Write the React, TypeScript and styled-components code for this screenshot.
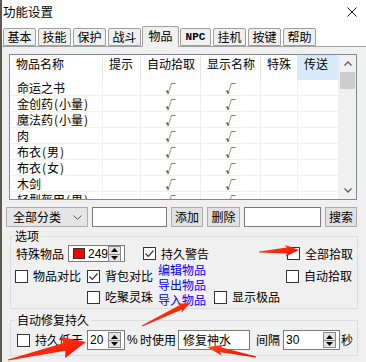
import React from "react";
import styled, { createGlobalStyle } from "styled-components";

const GlobalStyle = createGlobalStyle`
  html, body { margin: 0; padding: 0; background: #f0f0f0; }
  body {
    font-family: "Noto Sans CJK SC", "Noto Sans", sans-serif;
    font-size: 12px;
    line-height: 14px;
    color: #000;
  }
  * { box-sizing: border-box; }
`;

const Window = styled.div`
  position: relative;
  width: 366px;
  height: 362px;
  background: #f0f0f0;
  border-left: 2px solid #5f574c;
  overflow: hidden;
  display: flex;
  flex-direction: column;
`;

const TitleBar = styled.div`
  flex: none;
  height: 26px;
  background: #fff;
  display: flex;
  align-items: center;
  justify-content: space-between;
  padding: 0 9px 2px 1px;
  font-size: 12.5px;
`;

const TabStrip = styled.div`
  flex: none;
  height: 21px;
  display: flex;
  align-items: flex-end;
  gap: 2px;
  padding-left: 1px;
  background: #fff;
  border-bottom: 1px solid #a0a0a0;
`;

const Tab = styled.div<{ $w: number; $active?: boolean; $latin?: boolean }>`
  width: ${(p) => p.$w}px;
  height: ${(p) => (p.$active ? 21 : 18)}px;
  margin: ${(p) => (p.$active ? "0 -1px -1px -1px" : "0")};
  border: 1px solid #a0a0a0;
  border-bottom: ${(p) => (p.$active ? "none" : "1px solid #a0a0a0")};
  border-radius: 2px 2px 0 0;
  background: #f0f0f0;
  display: flex;
  align-items: ${(p) => (p.$active ? "flex-start" : "center")};
  padding-top: ${(p) => (p.$active ? 2 : 0)}px;
  justify-content: center;
  font-family: ${(p) =>
    p.$latin ? '"Liberation Mono", monospace' : '"Noto Sans CJK SC", sans-serif'};
  font-size: ${(p) => (p.$latin ? 11 : 12)}px;
  font-weight: ${(p) => (p.$latin ? 700 : 400)};
  position: relative;
  z-index: ${(p) => (p.$active ? 1 : 0)};
`;

const Panel = styled.div`
  flex: 1;
  display: flex;
  flex-direction: column;
  padding: 7px 0 0 4px;
`;

/* ---------- list view ---------- */
const List = styled.div`
  margin-left: 3px;
  width: 348px;
  height: 146px;
  border: 1px solid #828790;
  background: #fff;
  display: flex;
`;

const ListBody = styled.div`
  flex: 1;
  overflow: hidden;
  display: flex;
  flex-direction: column;
`;

const HeaderRow = styled.div`
  flex: none;
  height: 25px;
  display: flex;
`;

const HeaderCell = styled.div<{ $w: number; $hl?: boolean }>`
  width: ${(p) => p.$w}px;
  flex: none;
  padding: 2px 0 0 6px;
  border-right: 1px solid ${(p) => (p.$hl ? "#d9ebf9" : "#e5e5e5")};
  background: ${(p) => (p.$hl ? "#d9ebf9" : "#fff")};
  white-space: nowrap;
  overflow: hidden;
`;

const Row = styled.div`
  flex: none;
  height: 16px;
  display: flex;
  border-bottom: 1px solid #f0f0f0;
`;

const Cell = styled.div<{ $w: number; $center?: boolean }>`
  width: ${(p) => p.$w}px;
  flex: none;
  border-right: 1px solid #f0f0f0;
  padding-left: ${(p) => (p.$center ? 0 : 7)}px;
  display: flex;
  align-items: center;
  justify-content: ${(p) => (p.$center ? "center" : "flex-start")};
  line-height: 15px;
  white-space: nowrap;
  overflow: hidden;
`;

const Paren = styled.span`
  display: inline-block;
  width: 6px;
  text-align: center;
`;

const Tick = styled.span`
  font-size: 10px;
  line-height: 10px;
  margin-top: 3px;
`;

const ScrollBar = styled.div`
  flex: none;
  width: 17px;
  background: #f0f0f0;
  display: flex;
  flex-direction: column;
`;

const ScrollBtn = styled.div`
  height: 17px;
  display: flex;
  align-items: center;
  justify-content: center;
`;

const Thumb = styled.div`
  height: 17px;
  margin: 0 1px;
  background: #cdcdcd;
`;

const ScrollTrack = styled.div`
  flex: 1;
`;

/* ---------- toolbar ---------- */
const Toolbar = styled.div`
  margin-top: 7px;
  height: 20px;
  display: flex;
  gap: 4px;
`;

const Combo = styled.div`
  width: 82px;
  height: 20px;
  border: 1px solid #adadad;
  background: #e5e5e5;
  display: flex;
  align-items: center;
  justify-content: space-between;
  padding: 0 5px 0 6px;
`;

const Input = styled.div<{ $w: number; $ml?: number }>`
  width: ${(p) => p.$w}px;
  height: 20px;
  margin-left: ${(p) => p.$ml ?? 0}px;
  border: 1px solid #7a7a7a;
  background: #fff;
  display: flex;
  align-items: center;
  padding-left: 4px;
  flex: none;
`;

const Button = styled.div<{ $w: number }>`
  width: ${(p) => p.$w}px;
  height: 20px;
  border: 1px solid #adadad;
  background: #e1e1e1;
  display: flex;
  align-items: center;
  justify-content: center;
  flex: none;
`;

/* ---------- group boxes ---------- */
const Group = styled.fieldset<{ $mt: number; $pb: number }>`
  margin: ${(p) => p.$mt}px 0 0 4px;
  width: 348px;
  padding: 0 0 ${(p) => p.$pb}px 0;
  border: 1px solid #dcdcdc;
  min-width: 0;
`;

const Legend = styled.legend<{ $ml: number }>`
  margin-left: ${(p) => p.$ml}px;
  padding: 0 2px;
  line-height: 14px;
  font-size: 12px;
`;

const FlexRow = styled.div<{ $h: number; $mt: number; $pl: number }>`
  height: ${(p) => p.$h}px;
  margin-top: ${(p) => p.$mt}px;
  padding-left: ${(p) => p.$pl}px;
  display: flex;
  align-items: center;
`;

const OptGrid = styled.div`
  margin-top: 3px;
  padding-left: 4px;
  display: grid;
  grid-template-columns: 72px 71px 56px 72px 1fr;
  grid-template-rows: 22px 20px;
  align-items: center;
`;

const GridSlot = styled.div<{ $col: number; $row: number; $span?: number }>`
  grid-column: ${(p) => p.$col};
  grid-row: ${(p) => p.$row} / span ${(p) => p.$span ?? 1};
  align-self: ${(p) => (p.$span ? "start" : "center")};
  display: flex;
`;

const Links = styled.div`
  margin-top: -3px;
  display: flex;
  flex-direction: column;
  color: #0000ff;
  line-height: 15px;
  cursor: pointer;
`;

const Text = styled.span<{ $ml?: number; $w?: number; $latin?: boolean }>`
  margin-left: ${(p) => p.$ml ?? 0}px;
  ${(p) => (p.$w ? `width: ${p.$w}px;` : "")}
  flex: none;
  white-space: nowrap;
  font-family: ${(p) =>
    p.$latin ? '"Liberation Sans", sans-serif' : '"Noto Sans CJK SC", sans-serif'};
`;

const CheckLabel = styled.label<{ $ml?: number }>`
  display: inline-flex;
  align-items: center;
  gap: 5px;
  margin-left: ${(p) => p.$ml ?? 0}px;
  white-space: nowrap;
  flex: none;
`;

const CheckBox = styled.span`
  width: 13px;
  height: 13px;
  border: 1px solid #333;
  background: #fff;
  display: inline-flex;
  align-items: center;
  justify-content: center;
  flex: none;
`;

const SpinBox = styled.div<{ $w: number; $h: number; $ml?: number }>`
  width: ${(p) => p.$w}px;
  height: ${(p) => p.$h}px;
  margin-left: ${(p) => p.$ml ?? 0}px;
  border: 1px solid #7a7a7a;
  background: #fff;
  display: flex;
  align-items: center;
  padding: 0 3px 0 2px;
  flex: none;
  font-family: "Liberation Sans", sans-serif;
`;

const Swatch = styled.span`
  width: 13px;
  height: 11px;
  background: #ff0000;
  border: 1px solid #333;
  margin: 0 3px 0 2px;
`;

const SpinCol = styled.span`
  margin-left: auto;
  display: flex;
  flex-direction: column;
  border: 1px solid #8a8a8a;
`;

const SpinBtn = styled.span<{ $top?: boolean }>`
  width: 11px;
  height: 7px;
  background: #e3e3e3;
  border-top: ${(p) => (p.$top ? "none" : "1px solid #8a8a8a")};
  display: flex;
  align-items: center;
  justify-content: center;
`;

const Overlay = styled.svg`
  position: absolute;
  left: -2px;
  top: 0;
  width: 366px;
  height: 362px;
  pointer-events: none;
`;

/* ---------- helpers ---------- */
const Chevron = ({ up }: { up?: boolean }) => (
  <svg width="8" height="5" viewBox="0 0 8 5">
    <polyline
      points={up ? "0.5,4.5 4,1 7.5,4.5" : "0.5,0.5 4,4 7.5,0.5"}
      fill="none"
      stroke="#606060"
      strokeWidth="1.3"
    />
  </svg>
);

const Check = ({ label, checked, ml }: { label: string; checked?: boolean; ml?: number }) => (
  <CheckLabel $ml={ml}>
    <CheckBox>
      {checked && (
        <svg width="11" height="11" viewBox="0 0 11 11">
          <polyline points="1.5,5.5 4.3,8.3 9.5,2.5" fill="none" stroke="#333" strokeWidth="1.2" />
        </svg>
      )}
    </CheckBox>
    <span>{label}</span>
  </CheckLabel>
);

const Spinner = () => (
  <SpinCol>
    <SpinBtn $top>
      <svg width="7" height="4" viewBox="0 0 7 4">
        <polygon points="0,4 3.5,0 7,4" fill="#000" />
      </svg>
    </SpinBtn>
    <SpinBtn>
      <svg width="7" height="4" viewBox="0 0 7 4">
        <polygon points="0,0 3.5,4 7,0" fill="#000" />
      </svg>
    </SpinBtn>
  </SpinCol>
);

const ItemName = ({ name }: { name: string }) => (
  <>
    {name.split(/([()])/).map((part, i) =>
      part === "(" || part === ")" ? <Paren key={i}>{part}</Paren> : <span key={i}>{part}</span>
    )}
  </>
);

type Pt = [number, number];
function arrowPoints(tail: Pt, tip: Pt, ws: number, hl: number, hw: number, wt = 1): string {
  const dx = tip[0] - tail[0];
  const dy = tip[1] - tail[1];
  const len = Math.hypot(dx, dy);
  const ux = dx / len;
  const uy = dy / len;
  const nx = -uy;
  const ny = ux;
  const bx = tip[0] - ux * hl;
  const by = tip[1] - uy * hl;
  const p = (x: number, y: number) => `${x.toFixed(1)},${y.toFixed(1)}`;
  return [
    p(tail[0] + (nx * wt) / 2, tail[1] + (ny * wt) / 2),
    p(bx + (nx * ws) / 2, by + (ny * ws) / 2),
    p(bx + (nx * hw) / 2 - ux * 2, by + (ny * hw) / 2 - uy * 2),
    p(tip[0], tip[1]),
    p(bx - (nx * hw) / 2 - ux * 2, by - (ny * hw) / 2 - uy * 2),
    p(bx - (nx * ws) / 2, by - (ny * ws) / 2),
    p(tail[0] - (nx * wt) / 2, tail[1] - (ny * wt) / 2),
  ].join(" ");
}

const tabs = [
  { label: "基本", w: 33 },
  { label: "技能", w: 33 },
  { label: "保护", w: 33 },
  { label: "战斗", w: 33 },
  { label: "物品", w: 37, active: true },
  { label: "NPC", w: 31, latin: true },
  { label: "挂机", w: 33 },
  { label: "按键", w: 33 },
  { label: "帮助", w: 33 },
];

const cols = [
  { label: "物品名称", w: 93 },
  { label: "提示", w: 38 },
  { label: "自动拾取", w: 60 },
  { label: "显示名称", w: 60 },
  { label: "特殊", w: 37 },
  { label: "传送", w: 41, hl: true },
];

const items = [
  "命运之书",
  "金创药(小量)",
  "魔法药(小量)",
  "肉",
  "布衣(男)",
  "布衣(女)",
  "木剑",
  "轻型盔甲(男)",
];

const arrows: { tail: Pt; tip: Pt; ws: number; hl: number; hw: number }[] = [
  { tail: [259, 252], tip: [299, 250], ws: 6, hl: 12, hw: 12 },
  { tail: [142, 326], tip: [190, 303], ws: 5, hl: 10, hw: 10 },
  { tail: [8, 360], tip: [86, 342], ws: 8, hl: 22, hw: 22 },
  { tail: [256, 357], tip: [207, 347], ws: 5, hl: 14, hw: 11 },
];

export default function App() {
  return (
    <>
      <GlobalStyle />
      <Window>
        <TitleBar>
          <span>功能设置</span>
          <svg width="10" height="10" viewBox="0 0 10 10">
            <path d="M0.5 0.5 L9.5 9.5 M9.5 0.5 L0.5 9.5" stroke="#111" strokeWidth="1" />
          </svg>
        </TitleBar>
        <TabStrip>
          {tabs.map((t) => (
            <Tab key={t.label} $w={t.w} $active={t.active} $latin={t.latin}>
              {t.label}
            </Tab>
          ))}
        </TabStrip>
        <Panel>
          <List>
            <ListBody>
              <HeaderRow>
                {cols.map((c) => (
                  <HeaderCell key={c.label} $w={c.w} $hl={c.hl}>
                    {c.label}
                  </HeaderCell>
                ))}
              </HeaderRow>
              {items.map((name) => (
                <Row key={name}>
                  <Cell $w={93}>
                    <ItemName name={name} />
                  </Cell>
                  <Cell $w={38} $center />
                  <Cell $w={60} $center>
                    <Tick>√</Tick>
                  </Cell>
                  <Cell $w={60} $center>
                    <Tick>√</Tick>
                  </Cell>
                  <Cell $w={37} $center />
                  <Cell $w={41} $center />
                </Row>
              ))}
            </ListBody>
            <ScrollBar>
              <ScrollBtn>
                <Chevron up />
              </ScrollBtn>
              <Thumb />
              <ScrollTrack />
              <ScrollBtn>
                <Chevron />
              </ScrollBtn>
            </ScrollBar>
          </List>

          <Toolbar>
            <Combo>
              <span>全部分类</span>
              <svg width="9" height="5" viewBox="0 0 9 5">
                <polyline points="0.5,0.5 4.5,4.3 8.5,0.5" fill="none" stroke="#555" strokeWidth="1" />
              </svg>
            </Combo>
            <Input $w={75} />
            <Button $w={32}>添加</Button>
            <Button $w={33}>删除</Button>
            <Input $w={77} />
            <Button $w={32}>搜索</Button>
          </Toolbar>

          <Group $mt={2} $pb={1}>
            <Legend $ml={2}>选项</Legend>
            <FlexRow $h={17} $mt={2} $pl={5}>
              <Text>特殊物品</Text>
              <SpinBox $w={57} $h={17} $ml={4}>
                <Swatch />
                <Text $latin>249</Text>
                <Spinner />
              </SpinBox>
              <Check label="持久警告" checked ml={18} />
              <Check label="全部拾取" ml={78} />
            </FlexRow>
            <OptGrid>
              <GridSlot $col={1} $row={1}>
                <Check label="物品对比" />
              </GridSlot>
              <GridSlot $col={2} $row={1}>
                <Check label="背包对比" checked />
              </GridSlot>
              <GridSlot $col={3} $row={1} $span={2}>
                <Links>
                  <span>编辑物品</span>
                  <span>导出物品</span>
                  <span>导入物品</span>
                </Links>
              </GridSlot>
              <GridSlot $col={5} $row={1}>
                <Check label="自动拾取" />
              </GridSlot>
              <GridSlot $col={2} $row={2}>
                <Check label="吃聚灵珠" />
              </GridSlot>
              <GridSlot $col={4} $row={2}>
                <Check label="显示极品" />
              </GridSlot>
            </OptGrid>
          </Group>

          <Group $mt={4} $pb={5}>
            <Legend $ml={4}>自动修复持久</Legend>
            <FlexRow $h={20} $mt={3} $pl={6}>
              <Check label="持久低于" />
              <SpinBox $w={38} $h={20} $ml={4}>
                <Text $latin>20</Text>
                <Spinner />
              </SpinBox>
              <Text $ml={2} $w={8} $latin>%</Text>
              <Text $ml={5}>时使用</Text>
              <Input $w={72} $ml={2}>修复神水</Input>
              <Text $ml={6}>间隔</Text>
              <SpinBox $w={57} $h={20} $ml={3}>
                <Text $latin>30</Text>
                <Spinner />
              </SpinBox>
              <Text $ml={1}>秒</Text>
            </FlexRow>
          </Group>
        </Panel>

        <Overlay viewBox="0 0 366 362">
          <defs>
            <linearGradient id="arrowFill" x1="0" y1="0" x2="1" y2="1">
              <stop offset="0" stopColor="#ff4a1c" />
              <stop offset="1" stopColor="#f00a00" />
            </linearGradient>
          </defs>
          {arrows.map((a, i) => (
            <polygon key={i} points={arrowPoints(a.tail, a.tip, a.ws, a.hl, a.hw)} fill="url(#arrowFill)" />
          ))}
        </Overlay>
      </Window>
    </>
  );
}
